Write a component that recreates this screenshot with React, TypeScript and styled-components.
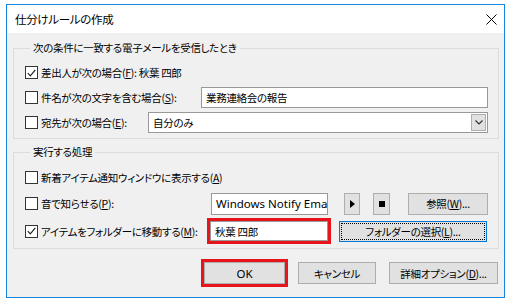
import styled, { createGlobalStyle, css } from 'styled-components';

const GlobalStyle = createGlobalStyle`
  body {
    margin: 0;
    background: #fff;
    font-family: "Noto Sans CJK JP", "Noto Sans", sans-serif;
  }
`;

// Meiryo UI風にかなを詰める
const uiText = css`
  font-family: "Noto Sans CJK JP", "Noto Sans", sans-serif;
  font-size: 10.5px;
  letter-spacing: -0.3px;
  font-feature-settings: "palt" 1;
  color: #000;
`;

const Page = styled.div`
  padding: 4px 0 0 6px;
`;

const Window = styled.div`
  ${uiText};
  width: 499px;
  height: 294px;
  box-sizing: border-box;
  border: 1px solid #1883d7;
  background: #f0f0f0;
  display: flex;
  flex-direction: column;
`;

const TitleBar = styled.div`
  height: 28px;
  flex: none;
  background: #fff;
  display: flex;
  align-items: center;
  justify-content: space-between;
  padding: 0 7px 0 8px;
`;

const Title = styled.span`
  ${uiText};
  font-size: 11.5px;
`;

const Group = styled.fieldset<{ $top: number }>`
  ${uiText};
  margin: ${p => p.$top}px 5px 0 6px;
  padding: 4px 10px 3px 11px;
  border: 1px solid #dcdcdc;
  min-width: 0;
`;

const Legend = styled.legend`
  ${uiText};
  margin-left: 5px;
  padding: 0 3px;
  line-height: 16px;
`;

const Row = styled.div<{ $h: number }>`
  height: ${p => p.$h}px;
  display: flex;
  align-items: center;
`;

const CheckLabel = styled.label<{ $w?: number }>`
  ${uiText};
  display: flex;
  align-items: center;
  gap: 3px;
  flex: none;
  width: ${p => (p.$w ? `${p.$w}px` : 'auto')};
  white-space: nowrap;
`;

const LabelText = styled.span`
  ${uiText};
`;

const Box = styled.span`
  width: 11px;
  height: 11px;
  border: 1px solid #333;
  background: #fff;
  display: inline-flex;
  align-items: center;
  justify-content: center;
`;

const Key = styled.span`
  text-decoration: underline;
`;

const TextBox = styled.div<{ $w?: number; $h: number }>`
  ${uiText};
  box-sizing: border-box;
  width: ${p => (p.$w ? `${p.$w}px` : 'auto')};
  flex: ${p => (p.$w ? 'none' : '1')};
  height: ${p => p.$h}px;
  border: 1px solid #999;
  background: #fff;
  display: flex;
  align-items: center;
  padding-left: 4px;
  white-space: nowrap;
  overflow: hidden;
`;

const Latin = styled.span`
  font-family: "Noto Sans", sans-serif;
  font-size: 11.5px;
  letter-spacing: 0;
`;

const DropBtn = styled.span`
  margin-left: auto;
  margin-right: 1px;
  width: 15px;
  height: 17px;
  box-sizing: border-box;
  border: 1px solid #adadad;
  background: #e1e1e1;
  display: flex;
  align-items: center;
  justify-content: center;
`;

const Highlight = styled.div`
  border: 3px solid #e8141c;
  flex: none;
  display: flex;
`;

const Button = styled.button<{ $w: number; $h?: number; $ml?: number; $focus?: boolean }>`
  ${uiText};
  box-sizing: border-box;
  width: ${p => p.$w}px;
  height: ${p => p.$h ?? 22}px;
  margin-left: ${p => p.$ml ?? 0}px;
  flex: none;
  padding: 0;
  border: 1px solid ${p => (p.$focus ? '#0078d7' : '#adadad')};
  background: #e1e1e1;
  display: flex;
  align-items: center;
  justify-content: center;
  white-space: nowrap;
`;

const FocusRing = styled.span`
  flex: 1;
  align-self: stretch;
  margin: 1px;
  border: 1px dotted #000;
  display: flex;
  align-items: center;
  justify-content: center;
`;

const Footer = styled.div`
  display: flex;
  align-items: center;
  justify-content: flex-end;
  margin: 10px 6px 0 0;
  height: 28px;
`;

function Check({ checked }: { checked?: boolean }) {
  return (
    <Box>
      {checked && (
        <svg width="9" height="8" viewBox="0 0 9 8">
          <path d="M0.8 4.2 L3.3 6.8 L8.3 0.8" fill="none" stroke="#222" strokeWidth="1.2" />
        </svg>
      )}
    </Box>
  );
}

export default function App() {
  return (
    <>
      <GlobalStyle />
      <Page>
        <Window>
          <TitleBar>
            <Title>仕分けルールの作成</Title>
            <svg width="11" height="11" viewBox="0 0 11 11">
              <path d="M0.5 0.5 L10.5 10.5 M10.5 0.5 L0.5 10.5" stroke="#000" strokeWidth="1" />
            </svg>
          </TitleBar>

          <Group $top={7}>
            <Legend>次の条件に一致する電子メールを受信したとき</Legend>
            <Row $h={25}>
              <CheckLabel>
                <Check checked />
                <LabelText>差出人が次の場合(<Key>F</Key>): 秋葉 四郎</LabelText>
              </CheckLabel>
            </Row>
            <Row $h={25}>
              <CheckLabel $w={176}>
                <Check />
                <LabelText>件名が次の文字を含む場合(<Key>S</Key>):</LabelText>
              </CheckLabel>
              <TextBox $h={21}>業務連絡会の報告</TextBox>
            </Row>
            <Row $h={25}>
              <CheckLabel $w={123}>
                <Check />
                <LabelText>宛先が次の場合(<Key>E</Key>):</LabelText>
              </CheckLabel>
              <TextBox $h={21}>
                自分のみ
                <DropBtn>
                  <svg width="8" height="5" viewBox="0 0 8 5">
                    <path d="M0.5 0.5 L4 4 L7.5 0.5" fill="none" stroke="#333" strokeWidth="1.2" />
                  </svg>
                </DropBtn>
              </TextBox>
            </Row>
          </Group>

          <Group $top={5}>
            <Legend>実行する処理</Legend>
            <Row $h={26}>
              <CheckLabel>
                <Check />
                <LabelText>新着アイテム通知ウィンドウに表示する(<Key>A</Key>)</LabelText>
              </CheckLabel>
            </Row>
            <Row $h={27}>
              <CheckLabel $w={186}>
                <Check />
                <LabelText>音で知らせる(<Key>P</Key>):</LabelText>
              </CheckLabel>
              <TextBox $w={117} $h={22}>
                <Latin>Windows Notify Ema</Latin>
              </TextBox>
              <Button $w={16} $ml={16}>
                <svg width="5" height="8" viewBox="0 0 5 8">
                  <path d="M0 0 L5 4 L0 8 Z" fill="#000" />
                </svg>
              </Button>
              <Button $w={17} $ml={13}>
                <svg width="6" height="6" viewBox="0 0 6 6">
                  <rect width="6" height="6" fill="#000" />
                </svg>
              </Button>
              <Button $w={80} $ml={18}>
                参照(<Key>W</Key>)...
              </Button>
            </Row>
            <Row $h={28}>
              <CheckLabel $w={182}>
                <Check checked />
                <LabelText>アイテムをフォルダーに移動する(<Key>M</Key>):</LabelText>
              </CheckLabel>
              <Highlight>
                <TextBox $w={118} $h={20}>秋葉 四郎</TextBox>
              </Highlight>
              <Button $w={148} $h={21} $ml={8} $focus>
                <FocusRing>
                  フォルダーの選択(<Key>L</Key>)...
                </FocusRing>
              </Button>
            </Row>
          </Group>

          <Footer>
            <Highlight>
              <Button $w={81}>
                <Latin>OK</Latin>
              </Button>
            </Highlight>
            <Button $w={78} $ml={10}>キャンセル</Button>
            <Button $w={109} $ml={13}>
              詳細オプション(<Key>D</Key>)...
            </Button>
          </Footer>
        </Window>
      </Page>
    </>
  );
}
